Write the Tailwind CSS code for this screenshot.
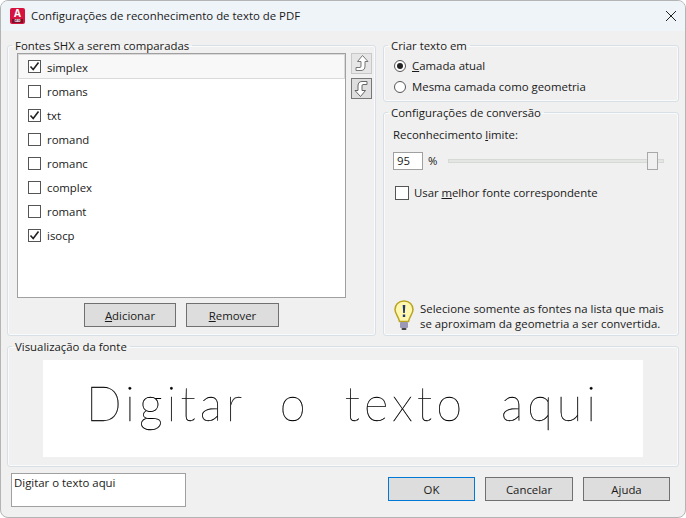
<!DOCTYPE html>
<html>
<head>
  <meta charset="utf-8" />
  <title>Configurações de reconhecimento de texto de PDF</title>
  <script src="https://cdn.jsdelivr.net/npm/@tailwindcss/browser@4"></script>
</head>
<body class="bg-white">
  <div class="w-[686px] h-[518px] flex flex-col overflow-hidden rounded-[8px] border border-[#b4b4b4] bg-[#f0f0f0] text-[11.4px] leading-[16px] text-[#1a1a1a] font-['Open_Sans',sans-serif]">

    <!-- title bar -->
    <div class="h-[30px] shrink-0 flex items-center bg-[#eff4f9] pl-[9px] pr-[7px]">
      <div class="w-[15px] h-[16px] rounded-[2px] bg-[#d6133f] flex flex-col items-center text-white">
        <span class="text-[10px] leading-[11px] font-bold">A</span>
        <span class="w-[11px] h-[4px] bg-[#7a0f2a] text-[3px] leading-[4px] text-center font-bold">CAD</span>
      </div>
      <span class="ml-[6px] text-[#1a1a1a]">Configurações de reconhecimento de texto de PDF</span>
      <svg class="ml-auto" width="14" height="14" viewBox="0 0 14 14" fill="none" stroke="#222" stroke-width="1"><path d="M2 2 L12 12 M12 2 L2 12" /></svg>
    </div>

    <div class="flex-1 flex flex-col gap-[3px] pt-[7px] px-[6px]">
      <div class="flex gap-[7px] h-[298px]">

        <!-- fonts group -->
        <fieldset class="w-[369px] h-full rounded-[3px] border border-[#d8e0e7] pl-[9px] shadow-[inset_0_0_0_1px_#fafafa]">
          <legend class="ml-[-5px] px-[3px] h-[15px] leading-[15px]">Fontes SHX a serem comparadas</legend>
          <div class="flex gap-[5px]">
            <div class="w-[329px] h-[245px] border border-[#a0a0a0] bg-white">
              <div class="h-[25px] flex items-center gap-[6px] pl-[9px] border border-[#dadada] bg-[#f8f8f8]">
                <span class="w-[13px] h-[13px] border border-[#555] bg-white flex items-center justify-center"><svg width="11" height="11" viewBox="0 0 11 11" fill="none" stroke="#222" stroke-width="1.6"><path d="M1.5 5.5 L4.2 8.5 L9.5 1.5" /></svg></span>
                <span class="pt-[2px]">simplex</span>
              </div>
              <div class="h-[24px] flex items-center gap-[6px] pl-[9px] border border-transparent">
                <span class="w-[13px] h-[13px] border border-[#555] bg-white"></span>
                <span class="pt-[2px]">romans</span>
              </div>
              <div class="h-[24px] flex items-center gap-[6px] pl-[9px] border border-transparent">
                <span class="w-[13px] h-[13px] border border-[#555] bg-white flex items-center justify-center"><svg width="11" height="11" viewBox="0 0 11 11" fill="none" stroke="#222" stroke-width="1.6"><path d="M1.5 5.5 L4.2 8.5 L9.5 1.5" /></svg></span>
                <span class="pt-[2px]">txt</span>
              </div>
              <div class="h-[24px] flex items-center gap-[6px] pl-[9px] border border-transparent">
                <span class="w-[13px] h-[13px] border border-[#555] bg-white"></span>
                <span class="pt-[2px]">romand</span>
              </div>
              <div class="h-[24px] flex items-center gap-[6px] pl-[9px] border border-transparent">
                <span class="w-[13px] h-[13px] border border-[#555] bg-white"></span>
                <span class="pt-[2px]">romanc</span>
              </div>
              <div class="h-[24px] flex items-center gap-[6px] pl-[9px] border border-transparent">
                <span class="w-[13px] h-[13px] border border-[#555] bg-white"></span>
                <span class="pt-[2px]">complex</span>
              </div>
              <div class="h-[24px] flex items-center gap-[6px] pl-[9px] border border-transparent">
                <span class="w-[13px] h-[13px] border border-[#555] bg-white"></span>
                <span class="pt-[2px]">romant</span>
              </div>
              <div class="h-[24px] flex items-center gap-[6px] pl-[9px] border border-transparent">
                <span class="w-[13px] h-[13px] border border-[#555] bg-white flex items-center justify-center"><svg width="11" height="11" viewBox="0 0 11 11" fill="none" stroke="#222" stroke-width="1.6"><path d="M1.5 5.5 L4.2 8.5 L9.5 1.5" /></svg></span>
                <span class="pt-[2px]">isocp</span>
              </div>
            </div>
            <div class="flex flex-col gap-[4px]">
              <div class="w-[21px] h-[21px] border border-[#c8c8c8] bg-[#e6e6e6] flex items-center justify-center">
                <svg width="19" height="19" viewBox="0 0 19 19" fill="#fff" stroke="#777" stroke-width="1"><path d="M10.5 1.5 L16 7.5 L13 7.5 L13 12 Q13 16.5 9 16.5 L4 16.5 L4 13.5 L8 13.5 Q9 13.5 9 12 L9 7.5 L5.5 7.5 Z" /></svg>
              </div>
              <div class="w-[21px] h-[21px] border border-[#777] bg-[#dedede] flex items-center justify-center">
                <svg width="19" height="19" viewBox="0 0 19 19" fill="#fff" stroke="#666" stroke-width="1"><path d="M8.5 17.5 L3 11.5 L6 11.5 L6 7 Q6 2.5 10 2.5 L15 2.5 L15 5.5 L11 5.5 Q10 5.5 10 7 L10 11.5 L13.5 11.5 Z" /></svg>
              </div>
            </div>
          </div>
          <div class="w-[329px] flex justify-center gap-[10px] mt-[5px]">
            <button class="w-[92px] h-[24px] border border-[#707070] bg-[#dddddd] pt-[1px]"><span class="underline">A</span>dicionar</button>
            <button class="w-[93px] h-[24px] border border-[#707070] bg-[#dddddd] pt-[1px]"><span class="underline">R</span>emover</button>
          </div>
        </fieldset>

        <div class="w-[296px] flex flex-col gap-[3px]">
          <!-- create text in -->
          <fieldset class="h-[64px] shrink-0 rounded-[3px] border border-[#d8e0e7] pl-[10px] shadow-[inset_0_0_0_1px_#fafafa]">
            <legend class="ml-[-6px] px-[3px] h-[15px] leading-[15px]">Criar texto em</legend>
            <div class="flex items-center gap-[6px] h-[21px] mt-[2px]">
              <span class="w-[12px] h-[12px] rounded-full border border-[#555] bg-white flex items-center justify-center"><span class="w-[6px] h-[6px] rounded-full bg-[#222]"></span></span>
              <span><span class="underline">C</span>amada atual</span>
            </div>
            <div class="flex items-center gap-[6px] h-[21px]">
              <span class="w-[12px] h-[12px] rounded-full border border-[#555] bg-white"></span>
              <span>Mesma camada como <span class="underline">g</span>eometria</span>
            </div>
          </fieldset>

          <!-- conversion settings -->
          <fieldset class="flex-1 min-h-0 rounded-[3px] border border-[#d8e0e7] px-[9px] shadow-[inset_0_0_0_1px_#fafafa]">
            <legend class="ml-[-5px] px-[3px] h-[15px] leading-[15px]">Configurações de conversão</legend>
            <div class="mt-[7px]">Reconhecimento <span class="underline">l</span>imite:</div>
            <div class="flex items-center mt-[9px] h-[18px]">
              <div class="w-[30px] h-[18px] border border-[#a0a0a0] bg-white pl-[3px] leading-[16px]">95</div>
              <span class="ml-[5px] w-[10px]">%</span>
              <div class="relative ml-[10px] w-[216px] h-[4px] bg-[#e3e6e3] border border-[#d6d9d6]">
                <span class="absolute left-[198px] top-[-8px] w-[11px] h-[18px] border border-[#a8a8a8] bg-[#f0f0f0]"></span>
              </div>
            </div>
            <div class="flex items-center gap-[5px] mt-[15px] ml-[2px]">
              <span class="w-[14px] h-[14px] border border-[#555] bg-white"></span>
              <span class="tracking-[-0.05px]">Usar <span class="underline">m</span>elhor fonte correspondente</span>
            </div>
            <div class="flex items-center gap-[6px] mt-[99px] ml-[1px]">
              <svg width="20" height="31" viewBox="0 0 20 31" class="shrink-0">
                <path d="M10 1 C4.5 1 1 5 1 9.5 C1 14 4.5 16 5.5 21.5 L14.5 21.5 C15.5 16 19 14 19 9.5 C19 5 15.5 1 10 1 Z" fill="#fff7b0" stroke="#b8a420" stroke-width="1.5" />
                <path d="M8.7 5 L11.3 5 L10.8 13 L9.2 13 Z M8.8 14.5 H11.2 V17 H8.8 Z" fill="#1f3a70" />
                <rect x="6" y="22" width="8" height="6" rx="1" fill="#9a98b5" />
                <rect x="7.5" y="28" width="5" height="2" rx="1" fill="#444" />
              </svg>
              <div class="leading-[15px] whitespace-nowrap">Selecione somente as fontes na lista que mais<br />se aproximam da geometria a ser convertida.</div>
            </div>
          </fieldset>
        </div>
      </div>

      <!-- font preview -->
      <fieldset class="h-[128px] w-[672px] rounded-[3px] border border-[#d8e0e7] shadow-[inset_0_0_0_1px_#fafafa]">
        <legend class="ml-[4px] px-[3px] h-[15px] leading-[15px]">Visualização da fonte</legend>
        <div class="mx-[35px] mt-[6px] h-[97px] pb-[12px] bg-white flex items-center justify-center text-black text-[47px] leading-[60px] font-thin tracking-[4px] whitespace-pre font-['Lato',sans-serif]">
          <span class="will-change-transform antialiased [-webkit-text-stroke:0.3px_#000]">Digitar  o  texto  aqui</span>
        </div>
      </fieldset>

      <!-- bottom row -->
      <div class="flex items-start mt-[3px]">
        <div class="w-[175px] h-[34px] ml-[4px] border border-[#a0a0a0] bg-white pl-[2px] pt-[1px]">Digitar o texto aqui</div>
        <div class="flex gap-[10px] ml-[202px] mt-[4px]">
          <button class="w-[87px] h-[24px] border border-[#0078d4] bg-[#dddddd] pt-[1px]">OK</button>
          <button class="w-[88px] h-[24px] border border-[#707070] bg-[#dddddd] pt-[1px]">Cancelar</button>
          <button class="w-[87px] h-[24px] border border-[#707070] bg-[#dddddd] pt-[1px]">Ajuda</button>
        </div>
      </div>
    </div>
  </div>
</body>
</html>
